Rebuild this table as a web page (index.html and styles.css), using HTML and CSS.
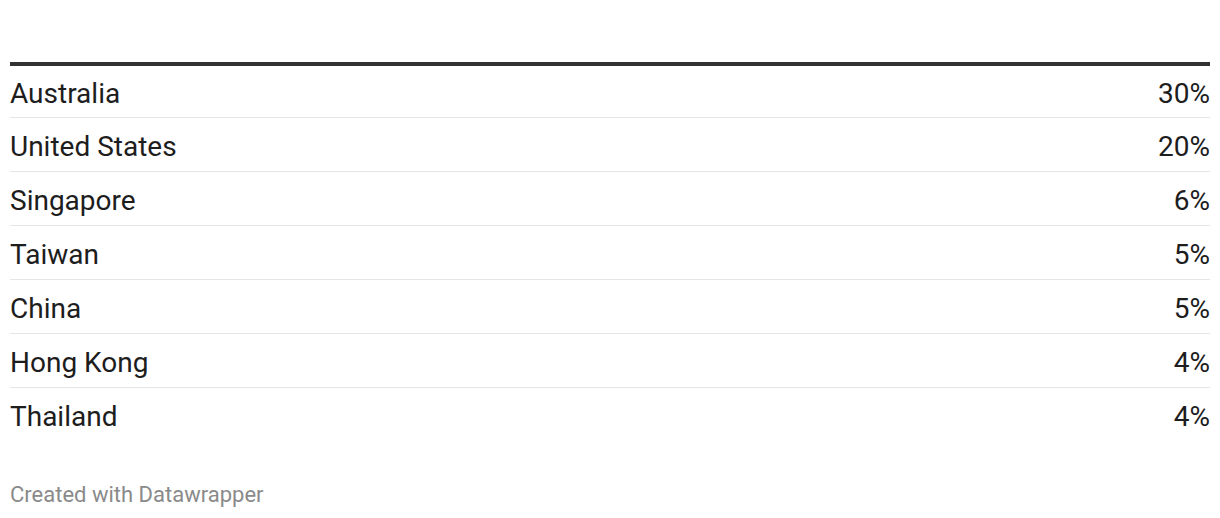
FILE: index.html
```html
<!DOCTYPE html>
<html>
<head>
<meta charset="utf-8">
<link rel="stylesheet" href="styles.css">
</head>
<body>
<div class="chart">
  <table class="tbl">
    <tbody>
      <tr><td class="name">Australia</td><td class="val">30%</td></tr>
      <tr><td class="name">United States</td><td class="val">20%</td></tr>
      <tr><td class="name">Singapore</td><td class="val">6%</td></tr>
      <tr><td class="name">Taiwan</td><td class="val">5%</td></tr>
      <tr><td class="name">China</td><td class="val">5%</td></tr>
      <tr><td class="name">Hong Kong</td><td class="val">4%</td></tr>
      <tr><td class="name">Thailand</td><td class="val">4%</td></tr>
    </tbody>
  </table>
  <div class="footer">Created with Datawrapper</div>
</div>
</body>
</html>
```
FILE: styles.css
```css
html, body {
  margin: 0;
  padding: 0;
  background: #fff;
}
body {
  font-family: Roboto, "Liberation Sans", sans-serif;
  color: #1d1d1d;
}
.chart {
  padding: 62px 10px 0 10px;
}
.tbl {
  width: 100%;
  border-collapse: collapse;
  border-top: 4px solid #333;
}
.tbl td {
  font-size: 28px;
  line-height: 33px;
  padding: 12px 0 8px 0;
  border-bottom: 1px solid #e6e6e6;
  vertical-align: top;
}
.tbl tr:first-child td {
  padding-top: 11px;
  padding-bottom: 7px;
}
.tbl tr:last-child td {
  border-bottom: none;
}
.tbl .name {
  text-align: left;
}
.tbl .val {
  text-align: right;
}
.footer {
  margin-top: 41px;
  font-size: 22px;
  color: #8a8a8a;
}
```
